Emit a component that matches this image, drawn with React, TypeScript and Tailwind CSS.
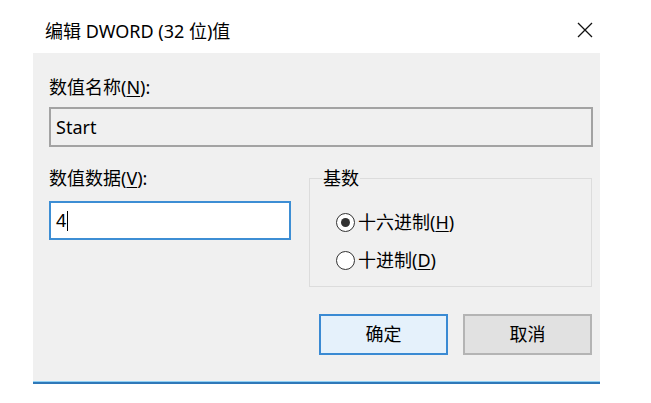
import React from 'react';

const font = { fontFamily: '"Noto Sans", "Noto Sans CJK SC", sans-serif' };

const Radio = ({ checked, label, hotkey }: { checked?: boolean; label: string; hotkey: string }) => (
  <label className="flex items-center h-[24px] text-[18px] leading-[24px] text-black">
    <span className="flex items-center justify-center w-[19px] h-[19px] rounded-full border border-[#333] bg-white">
      {checked && <span className="w-[9px] h-[9px] rounded-full bg-[#333]" />}
    </span>
    <span className="ml-[3px]">
      {label}(<span className="underline underline-offset-2">{hotkey}</span>)
    </span>
  </label>
);

const App = () => {
  return (
    <div className="w-[651px] h-[403px] bg-white overflow-hidden" style={font}>
      <div className="ml-[33px] w-[567px]">
        {/* title bar */}
        <div className="h-[53px] flex items-start justify-between pl-[12px] pr-[7px]">
          <span className="mt-[19px] text-[18px] leading-[24px] text-black">编辑 DWORD (32 位)值</span>
          <svg width="16" height="16" viewBox="0 0 16 16" className="mt-[22px]">
            <path d="M1 1 L15 15 M15 1 L1 15" stroke="#111" strokeWidth="1.3" fill="none" />
          </svg>
        </div>

        {/* body */}
        <div className="h-[328px] bg-[#f0f0f0] pl-[16px] pr-[7px] pt-[22px] text-black">
          <div className="text-[18px] leading-[24px]">
            数值名称(<span className="underline underline-offset-2">N</span>):
          </div>
          <div className="mt-[8px] h-[40px] border-2 border-[#a3a3a3] bg-[#f0f0f0] flex items-center pl-[5px] text-[18px]">
            Start
          </div>

          <div className="mt-[19px] flex">
            <div className="w-[242px]">
              <div className="text-[18px] leading-[24px]">
                数值数据(<span className="underline underline-offset-2">V</span>):
              </div>
              <div className="mt-[11px] h-[39px] border-2 border-[#3d8ed4] bg-white flex items-center pl-[5px] text-[18px]">
                4<span className="ml-[1px] w-px h-[20px] bg-black" />
              </div>
            </div>

            <fieldset className="ml-[18px] w-[283px] h-[121px] border border-[#dcdcdc] pl-[26px]">
              <legend className="ml-[-14px] px-[1px] text-[18px] leading-[24px]">基数</legend>
              <div className="mt-[20px] flex flex-col gap-[14px]">
                <Radio checked label="十六进制" hotkey="H" />
                <Radio label="十进制" hotkey="D" />
              </div>
            </fieldset>
          </div>

          <div className="mt-[27px] flex justify-end gap-[15px] pr-[1px]">
            <button className="w-[129px] h-[41px] border-2 border-[#3a8ad3] bg-[#e5f1fb] text-[18px]">确定</button>
            <button className="w-[129px] h-[41px] border-2 border-[#b4b4b4] bg-[#e1e1e1] text-[18px]">取消</button>
          </div>
        </div>
        <div className="h-px bg-[#8fd0f5]" />
        <div className="h-[2px] bg-[#2f78b8]" />
      </div>
    </div>
  );
};

export default App;
